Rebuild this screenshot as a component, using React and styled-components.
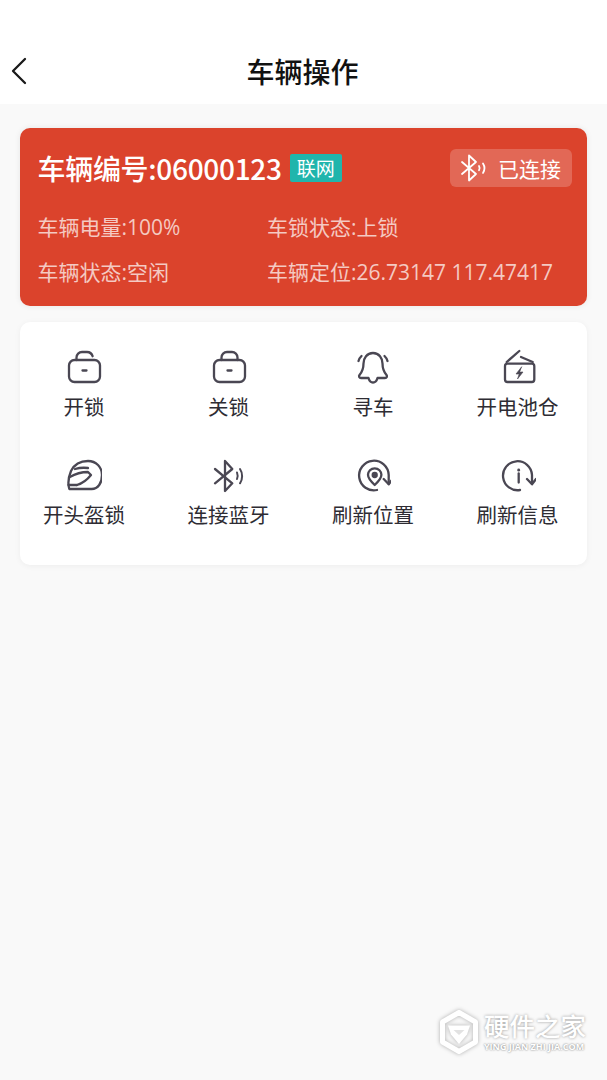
import React from "react";
import styled, { createGlobalStyle } from "styled-components";

const GlobalStyle = createGlobalStyle`
    html, body {
        margin: 0;
        padding: 0;
        background: #f9f9f9;
    }
    * {
        box-sizing: border-box;
    }
`;

const FONT = `"Noto Sans CJK SC", "Liberation Sans", sans-serif`;
const MIXED_FONT = `"Open Sans", "Noto Sans CJK SC", sans-serif`;
const ICON = "#4a4753";

const Page = styled.main`
    position: relative;
    width: 607px;
    height: 1080px;
    overflow: hidden;
    background: #f9f9f9;
    font-family: ${FONT};
`;

const Header = styled.header`
    height: 104px;
    padding: 38px 12px 0 10px;
    background: #fff;
    display: grid;
    grid-template-columns: 40px 1fr 40px;
    align-items: center;
`;

const BackButton = styled.button`
    width: 20px;
    height: 40px;
    padding: 0;
    border: 0;
    background: none;
    display: flex;
    align-items: center;
`;

const Title = styled.h1`
    margin: 0;
    font-size: 28px;
    font-weight: 500;
    line-height: 40px;
    color: #111;
    text-align: center;
`;

const Content = styled.div`
    padding: 24px 20px 0 20px;
    display: flex;
    flex-direction: column;
    gap: 16px;
`;

const StatusCard = styled.section`
    height: 178px;
    padding: 21px 15px 0 17.5px;
    border-radius: 10px;
    background: #db432c;
    box-shadow: 0 0 6px rgba(0, 0, 0, 0.08);
`;

const CardTop = styled.div`
    height: 38px;
    display: flex;
    align-items: center;
`;

const VehicleNo = styled.strong`
    font-size: 28px;
    font-weight: 500;
    line-height: 38px;
    letter-spacing: -0.3px;
    color: #fff;
`;

const NetBadge = styled.span`
    width: 52px;
    height: 28px;
    margin-left: 8px;
    border-radius: 2px;
    background: #20b5ac;
    color: #fff;
    font-size: 19px;
    line-height: 27px;
    text-align: center;
`;

const ConnectState = styled.div`
    width: 122px;
    height: 38px;
    margin-left: auto;
    border-radius: 6px;
    background: rgba(255, 255, 255, 0.2);
    color: #fff;
    font-size: 21px;
    display: flex;
    align-items: center;
    gap: 10px;
    padding-left: 10px;
`;

const InfoGrid = styled.dl`
    margin: 18px 0 0 0;
    display: grid;
    grid-template-columns: 229.5px 1fr;
    grid-auto-rows: 45px;
    align-items: center;
`;

const InfoItem = styled.dd`
    margin: 0;
    font-family: ${MIXED_FONT};
    font-size: 21px;
    line-height: 45px;
    white-space: nowrap;
    color: rgba(255, 255, 255, 0.72);
`;

const ActionCard = styled.section`
    height: 243px;
    padding: 27px 0 0 22px;
    border-radius: 10px;
    background: #fff;
    box-shadow: 0 1px 6px rgba(0, 0, 0, 0.05);
    display: grid;
    grid-template-columns: repeat(4, 84px);
    column-gap: 60.5px;
    row-gap: 18px;
    align-content: start;
`;

const Action = styled.button`
    width: 84px;
    height: 90px;
    padding: 0;
    border: 0;
    background: none;
    display: flex;
    flex-direction: column;
    align-items: center;
    font-family: ${FONT};
`;

const ActionLabel = styled.span`
    margin-top: 4px;
    font-size: 20.5px;
    line-height: 34px;
    white-space: nowrap;
    color: #2e2c33;
`;

const ActionSvg = styled.svg`
    width: 36px;
    height: 36px;
    flex: none;
    fill: none;
    stroke: ${ICON};
    stroke-width: 2.3;
    stroke-linecap: round;
    stroke-linejoin: round;
`;

const Watermark = styled.div`
    position: absolute;
    left: 439px;
    top: 1009px;
    display: flex;
    align-items: flex-start;
    gap: 5px;
    color: #fff;
`;

const WatermarkLogo = styled.svg`
    width: 40px;
    height: 46px;
    filter: drop-shadow(0 0 2px rgba(0, 0, 0, 0.3));
`;

const WatermarkText = styled.div`
    display: flex;
    flex-direction: column;
`;

const WatermarkName = styled.span`
    font-size: 25.5px;
    font-weight: 500;
    line-height: 32px;
    white-space: nowrap;
    text-shadow: 0 0 3px rgba(0, 0, 0, 0.4);
`;

const WatermarkSub = styled.span`
    font-family: "Open Sans", "Liberation Sans", sans-serif;
    font-size: 9px;
    font-weight: 700;
    line-height: 12px;
    white-space: nowrap;
    text-shadow: 0 0 2px rgba(0, 0, 0, 0.6);
`;

const icons = {
    unlock: (
        <>
            <rect x="3" y="11" width="31" height="22" rx="5.5" />
            <path d="M10.5 11V8.5a5.5 5.5 0 0 1 5.5-5.5h5a6 6 0 0 1 5.6 4.2" />
            <path d="M16.5 21.5h4" />
        </>
    ),
    lock: (
        <>
            <rect x="3" y="11" width="31" height="22" rx="5.5" />
            <path d="M10.5 11V8.5a5.5 5.5 0 0 1 5.5-5.5h5a5.5 5.5 0 0 1 5.5 5.5V11" />
            <path d="M16.5 21.5h4" />
        </>
    ),
    bell: (
        <>
            <path d="M18 4c-6 0-9.500 5-9.500 10.500 0 5-1 8-4 11.500-1 1.400-.3 3 1.500 3h7.500c.8 3 2.500 4.500 4.500 4.500s3.700-1.500 4.500-4.500H30c1.800 0 2.500-1.600 1.500-3-3-3.500-4-6.500-4-11.500C27.500 9 24 4 18 4z" />
            <path d="M3.500 12c.6-2.200 1.500-3.600 3-5" />
            <path d="M32.500 12c-.6-2.200-1.500-3.600-3-5" />
        </>
    ),
    battery: (
        <>
            <path d="M6.700 13 19.300 2" />
            <path d="M21 8l11.700 5" />
            <rect x="5" y="14.700" width="29.300" height="18.300" rx="2.500" />
            <path d="M21.500 18 16 25h3.200l-1.700 5 5.500-7h-3.200z" fill={ICON} strokeWidth="0.6" />
        </>
    ),
    helmet: (
        <>
            <path d="M3.300 32h22.400C32 32 36 26 36 18 36 10 30 4 22 4 14 4 8 8 5 14 2.500 20 1.500 26 3.300 32z" />
            <path d="M2.500 28h8.500" />
            <path d="M3.800 20c6-3.500 12-5 18.200-5l3 3c-4 5-9 8.500-14 10" />
            <path d="M9 12c5-1.500 9-1.500 13-1" />
        </>
    ),
    bluetooth: (
        <>
            <path d="M4 12 21.300 26.300 14 34V4l7.300 8L4 26.300" />
            <path d="M26 15.500c.8 2 .8 4.500 0 6.500" strokeWidth="2" />
            <path d="M29 12c2.800 4 2.800 10.500 0 14.300" strokeWidth="2" />
        </>
    ),
    refreshPin: (
        <>
            <path d="M22 33A14.800 14.800 0 1 1 33.700 18v9" />
            <path d="M28.700 22l5 5.300 4-5.300" />
            <path d="M19.700 11.300c-3.800 0-6.700 2.900-6.700 6.500 0 3.600 3.700 7.400 6.700 10.200 3-2.800 6.700-6.600 6.700-10.200 0-3.600-2.900-6.500-6.700-6.500z" />
            <circle cx="19.700" cy="18" r="2" fill={ICON} />
        </>
    ),
    refreshInfo: (
        <>
            <path d="M20 33A14.500 14.500 0 1 1 32 18v8.500" />
            <path d="M27 22l5 5.300 4-5.300" />
            <path d="M18.700 16.500v9" />
            <path d="M18.700 12.800v.4" strokeWidth="2.800" />
        </>
    ),
};

const ACTIONS = [
    ["unlock", "开锁"],
    ["lock", "关锁"],
    ["bell", "寻车"],
    ["battery", "开电池仓"],
    ["helmet", "开头盔锁"],
    ["bluetooth", "连接蓝牙"],
    ["refreshPin", "刷新位置"],
    ["refreshInfo", "刷新信息"],
];

function App() {
    return (
        <Page>
            <GlobalStyle />
            <Header>
                <BackButton aria-label="返回">
                    <svg width="18" height="30" viewBox="0 0 18 30" fill="none" stroke="#1a1a1a" strokeWidth="2.300" strokeLinecap="round" strokeLinejoin="round">
                        <path d="M15 3 3 15l12 12" />
                    </svg>
                </BackButton>
                <Title>车辆操作</Title>
            </Header>
            <Content>
                <StatusCard>
                    <CardTop>
                        <VehicleNo>车辆编号:06000123</VehicleNo>
                        <NetBadge>联网</NetBadge>
                        <ConnectState>
                            <svg width="28" height="28" viewBox="0 0 28 28" fill="none" stroke="#fff" strokeWidth="1.800" strokeLinecap="round" strokeLinejoin="round">
                                <path d="M2 8 16 20 9 26.500V1.500l7 6.500L2 20" />
                                <path d="M19 12c.8 1.300.8 3 0 4.300" />
                                <path d="M23 9.500c1.800 2.800 1.800 6.600 0 9.400" />
                            </svg>
                            已连接
                        </ConnectState>
                    </CardTop>
                    <InfoGrid>
                        <InfoItem>车辆电量:100%</InfoItem>
                        <InfoItem>车锁状态:上锁</InfoItem>
                        <InfoItem>车辆状态:空闲</InfoItem>
                        <InfoItem>车辆定位:26.73147 117.47417</InfoItem>
                    </InfoGrid>
                </StatusCard>
                <ActionCard>
                    {ACTIONS.map(([icon, label]) => (
                        <Action key={label}>
                            <ActionSvg viewBox="0 0 36 36">{icons[icon]}</ActionSvg>
                            <ActionLabel>{label}</ActionLabel>
                        </Action>
                    ))}
                </ActionCard>
            </Content>
            <Watermark>
                <WatermarkLogo viewBox="0 0 40 46">
                    <path d="M20 3.500 36.500 13v20L20 42.500 3.500 33V13z" fill="none" stroke="#fff" strokeWidth="5" strokeLinejoin="round" />
                    <path d="M9 16.500h22l-3 9-8 9.500-8-9.500z" fill="#fff" />
                    <path d="M20 26l-5.500-5h11z" fill="#e2e2e2" />
                </WatermarkLogo>
                <WatermarkText>
                    <WatermarkName>硬件之家</WatermarkName>
                    <WatermarkSub>YING JIAN ZHI JIA.COM</WatermarkSub>
                </WatermarkText>
            </Watermark>
        </Page>
    );
}

export default App;
